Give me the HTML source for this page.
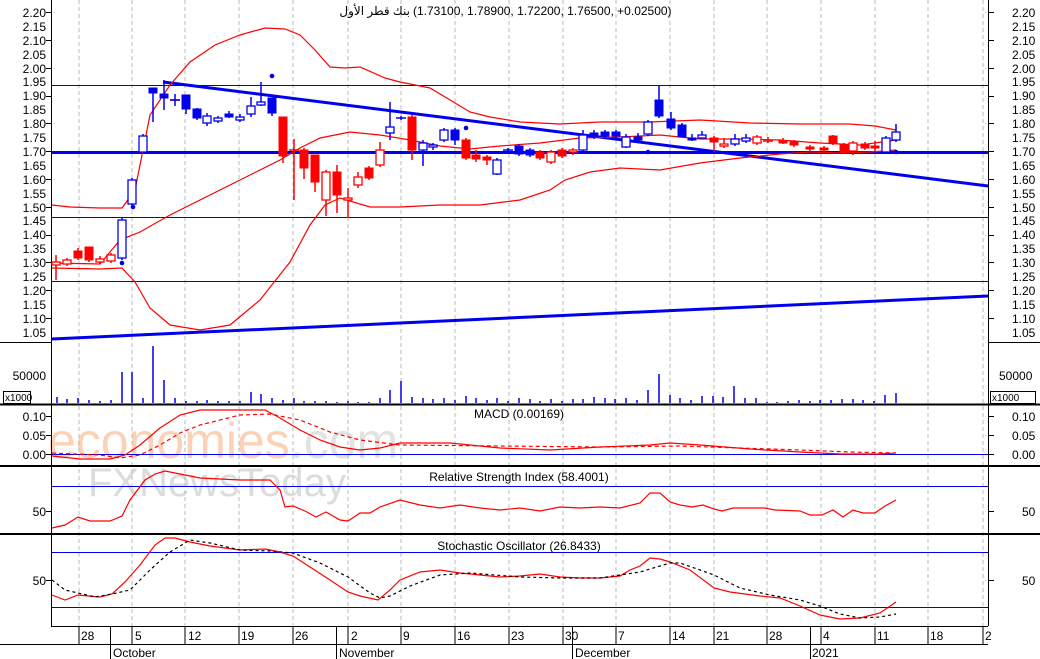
<!DOCTYPE html>
<html><head><meta charset="utf-8"><style>
html,body{margin:0;padding:0;background:#fff;}
svg{display:block;font-family:"Liberation Sans",sans-serif;}
text{font-size:12px;fill:#000;}
</style></head><body>
<svg width="1040" height="659" viewBox="0 0 1040 659" xmlns="http://www.w3.org/2000/svg">
<rect width="1040" height="659" fill="#fff"/>
<text x="48" y="458" style="font-size:50px;fill:#fbd2b8">economies<tspan style="fill:#e2e2e2">.com</tspan></text>
<text x="88" y="496" style="font-size:40px;fill:#dcdcdc">FXNewsToday</text>
<g stroke="#bbb" stroke-dasharray="4,3" stroke-width="1">
<path d="M79 0V626M132 0V626M185 0V626M239 0V626M293 0V626M348 0V626M401 0V626M455 0V626M509 0V626M563 0V626M616 0V626M670 0V626M714 0V626M767 0V626M821 0V626M875 0V626M928 0V626M983 0V626"/>
</g>
<g stroke="#000" stroke-width="1" fill="none">
<path d="M51.5 0V626M988.5 0V626M51 626.5H988M0 644.5H988"/>
<path d="M0 404.5H1040M0 466H1040M0 534H1040" stroke-width="2"/>
<path d="M0 342.5H52M988 342.5H1040"/>
</g>
<g stroke="#0000ee" fill="none">
<path d="M52 85.5H988M52 217.5H988M52 281.5H988"/>
<path d="M52 152.5H988" stroke-width="3"/>
<path d="M163 82L988 186" stroke-width="3"/>
<path d="M52 339L988 296" stroke-width="3"/>
<path d="M52 454.5H988M52 486.5H988M52 552.5H988M52 607.5H988"/>
</g>
<g stroke="#f00" fill="none" stroke-width="1.2">
<path d="M52 205L70 207L100 208L122 208L135 190L150 115L170 85L190 62L215 45L240 35L265 28L285 29L300 35L315 50L330 67L345 68L360 67L385 78L400 82L430 88L470 112L490 117L520 122L560 124L600 122L650 122L700 120L750 123L800 124L850 124L875 126L896 130"/>
<path d="M52 263L100 264L120 240L140 232L170 215L200 200L230 185L260 170L280 160L300 148L320 138L350 132L380 135L410 140L440 146L470 149L500 146L540 143L580 138L620 137L660 135L700 139L740 139L780 140L820 143L860 145L896 140"/>
<path d="M52 268L100 269L122 268L135 282L150 308L170 325L200 330L230 325L260 300L290 262L310 225L325 205L340 198L370 207L400 207L440 205L480 205L520 200L550 190L565 180L590 172L620 168L660 170L700 163L740 158L780 154L810 152L840 153L870 152L896 150"/>
</g>
<g stroke-width="1.5">
<path stroke="#f00" d="M56 255V280M67 258V266M78 248V260M89 247V262M100 256V264M111 253V263M283 117V163M294 139V200M304 148V179M315 155V192M326 170V216M337 165V213M348 188V218M358 172V188M369 166V180M380 142V167M412 115V160M466 138V160M476 150V162M487 155V165M540 150V160M551 150V164M562 148V158M573 148V155M714 136V152M724 138V148M757 135V145M768 137V143M783 138V144M794 140V147M810 145V151M824 146V152M833 135V145M844 143V154M853 141V155M865 142V150M875 141V151"/>
<path stroke="#0000ee" d="M122 218V260M132 178V206M143 134V152M153 88V122M164 80V110M175 94V106M186 95V114M197 108V120M207 113V126M218 116V123M229 111V118M240 114V122M251 97V117M261 82V106M272 98V116M390 102V140M401 116V120M423 140V166M433 143V150M444 128V142M455 128V145M497 158V175M508 148V152M519 144V156M530 148V157M583 130V152M594 130V139M605 130V139M616 130V139M626 134V148M638 133V143M648 120V136M659 85V118M671 112V130M682 123V137M692 134V141M702 131V138M735 134V146M746 134V143M886 136V154M896 124V142"/>
<path stroke="#f00" d="M170 100H180M289 150H299M763 141H773"/>
<path stroke="#0000ee" d="M170 100H180M396 118H406M503 150H513"/>
</g>
<g fill="#f00" stroke="#f00" stroke-width="1">
<rect x="74" y="251" width="8" height="7"/><rect x="85" y="247" width="8" height="13"/>
<rect x="279" y="117" width="8" height="39"/><rect x="300" y="150" width="8" height="18"/><rect x="311" y="155" width="8" height="27"/><rect x="333" y="172" width="8" height="23"/><rect x="365" y="168" width="8" height="10"/><rect x="408" y="117" width="8" height="33"/>
<rect x="462" y="140" width="8" height="18"/><rect x="472" y="155" width="8" height="4"/><rect x="483" y="157" width="8" height="3"/><rect x="536" y="152" width="8" height="6"/><rect x="558" y="150" width="8" height="6"/>
<rect x="710" y="138" width="8" height="4"/><rect x="779" y="141" width="8" height="2"/><rect x="790" y="142" width="8" height="3"/><rect x="806" y="147" width="8" height="2"/><rect x="820" y="148" width="8" height="2"/><rect x="829" y="136" width="8" height="7"/><rect x="840" y="145" width="8" height="7"/><rect x="861" y="144" width="8" height="4"/><rect x="871" y="146" width="8" height="2"/>
</g>
<g fill="#fff" stroke="#f00" stroke-width="1.3">
<rect x="52" y="262" width="8" height="3"/><rect x="63" y="260" width="8" height="4"/><rect x="96" y="259" width="8" height="3"/><rect x="107" y="255" width="8" height="6"/>
<rect x="322" y="172" width="8" height="28"/><rect x="344" y="198" width="8" height="2"/><rect x="354" y="177" width="8" height="8"/><rect x="376" y="150" width="8" height="15"/>
<rect x="547" y="152" width="8" height="10"/><rect x="569" y="150" width="8" height="2"/><rect x="720" y="144" width="8" height="2"/><rect x="753" y="137" width="8" height="6"/><rect x="849" y="143" width="8" height="8"/>
</g>
<g fill="#0000ee" stroke="#0000ee" stroke-width="1">
<rect x="149" y="88" width="8" height="5"/><rect x="160" y="94" width="8" height="4"/><rect x="182" y="95" width="8" height="14"/><rect x="193" y="109" width="8" height="9"/><rect x="225" y="114" width="8" height="3"/><rect x="268" y="98" width="8" height="15"/>
<rect x="451" y="130" width="8" height="10"/><rect x="515" y="146" width="8" height="8"/><rect x="526" y="150" width="8" height="5"/>
<rect x="590" y="133" width="8" height="4"/><rect x="601" y="132" width="8" height="4"/><rect x="612" y="132" width="8" height="4"/><rect x="634" y="137" width="8" height="3"/><rect x="655" y="100" width="8" height="16"/><rect x="667" y="119" width="8" height="9"/><rect x="678" y="125" width="8" height="12"/><rect x="688" y="138" width="8" height="2"/>
</g>
<g fill="#fff" stroke="#0000ee" stroke-width="1.3">
<rect x="118" y="220" width="8" height="38"/><rect x="128" y="180" width="8" height="24"/><rect x="139" y="136" width="8" height="16"/><rect x="203" y="116" width="8" height="7"/><rect x="214" y="118" width="8" height="3"/><rect x="236" y="117" width="8" height="3"/><rect x="247" y="106" width="8" height="8"/><rect x="257" y="102" width="8" height="3"/>
<rect x="386" y="127" width="8" height="6"/><rect x="419" y="143" width="8" height="7"/><rect x="429" y="145" width="8" height="2"/><rect x="440" y="130" width="8" height="10"/><rect x="493" y="160" width="8" height="14"/>
<rect x="579" y="135" width="8" height="15"/><rect x="622" y="137" width="8" height="10"/><rect x="644" y="122" width="8" height="12"/><rect x="698" y="135" width="8" height="3"/><rect x="731" y="139" width="8" height="5"/><rect x="742" y="138" width="8" height="3"/><rect x="882" y="138" width="8" height="14"/><rect x="892" y="132" width="8" height="8"/>
</g>
<g fill="#0000ee"><circle cx="133" cy="207" r="2.3"/><circle cx="122" cy="263" r="2.3"/><circle cx="272" cy="76" r="2.3"/><circle cx="466" cy="128" r="2.3"/><circle cx="648" cy="152" r="2.3"/><circle cx="896" cy="152" r="2.3"/></g>
<path stroke="#0000ee" stroke-width="1.5" d="M57 403V397M67 403V399M78 403V398M89 403V400M100 403V401M111 403V400M122 403V372M132 403V372M143 403V398M153 403V346M164 403V380M175 403V398M186 403V401M197 403V401M207 403V400M218 403V401M229 403V401M240 403V401M251 403V392M261 403V394M272 403V398M283 403V400M294 403V398M304 403V401M315 403V401M326 403V401M337 403V402M348 403V401M358 403V402M369 403V402M380 403V398M390 403V390M401 403V381M412 403V397M423 403V398M433 403V399M444 403V398M455 403V400M466 403V396M476 403V398M487 403V400M497 403V398M508 403V401M519 403V398M530 403V399M540 403V401M551 403V399M562 403V401M573 403V399M583 403V399M594 403V397M605 403V398M615 403V399M626 403V398M637 403V400M648 403V390M659 403V374M670 403V395M680 403V398M691 403V400M702 403V396M713 403V396M723 403V397M734 403V386M745 403V398M756 403V398M767 403V402M777 403V402M788 403V401M799 403V400M810 403V401M820 403V400M831 403V400M842 403V399M853 403V399M863 403V400M874 403V401M885 403V395M896 403V393"/>
<path fill="none" stroke="#f00" stroke-width="1.2" d="M52 456L80 459L110 459L125 455L140 445L160 428L180 415L200 410L240 410L265 410L280 418L300 430L320 440L340 447L360 450L380 448L400 443L450 443L500 448L550 450L600 447L650 445L670 443L700 445L750 449L800 452L840 454L880 454L896 453"/>
<path fill="none" stroke="#f00" stroke-width="1.2" stroke-dasharray="4,3" d="M52 453L100 455L120 458L140 455L160 445L180 433L200 425L240 415L270 414L300 420L330 432L360 440L400 445L500 446L600 447L680 446L740 448L800 450L850 452L896 453"/>
<path fill="none" stroke="#f00" stroke-width="1.2" d="M52 528L65 525L78 517L90 521L110 521L122 516L130 500L145 480L155 474L165 471L185 475L200 478L240 480L270 480L280 490L285 507L293 506L305 511L316 517L326 512L340 520L348 521L360 513L370 513L380 507L400 500L420 505L440 508L460 505L480 508L500 510L520 508L540 511L560 507L580 508L600 507L620 508L640 503L650 493L660 493L670 502L680 505L692 507L703 505L714 509L722 511L733 508L765 508L775 510L800 511L810 515L822 515L833 510L843 517L853 510L863 513L875 513L885 506L896 500"/>
<path fill="none" stroke="#f00" stroke-width="1.2" d="M52 595L65 600L78 595L100 597L112 594L125 582L140 565L155 545L165 538L175 538L190 542L210 546L240 550L265 549L280 552L293 556L310 567L330 580L348 592L360 596L378 600L390 590L400 580L420 572L440 570L460 573L480 575L500 577L520 576L540 574L560 577L580 578L600 578L620 576L630 570L640 566L650 558L660 559L670 562L690 570L714 588L730 592L760 596L780 598L800 606L820 615L840 619L860 618L880 613L896 602"/>
<path fill="none" stroke="#000" stroke-width="1.2" stroke-dasharray="3,3" d="M52 580L65 590L78 593L95 597L112 594L130 590L150 570L170 552L190 540L210 543L240 550L270 551L293 553L320 563L348 577L370 593L380 598L390 596L410 586L440 575L470 573L520 577L560 578L600 578L640 572L670 563L680 563L700 570L714 575L740 588L770 595L800 600L820 606L840 614L860 618L880 617L896 614"/>
<g stroke="#000" stroke-width="1">
<path d="M46 12.5H51M46 40.5H51M46 68.5H51M46 96.5H51M46 123.5H51M46 151.5H51M46 179.5H51M46 207.5H51M46 235.5H51M46 262.5H51M46 290.5H51M46 318.5H51M989 12.5H994M989 40.5H994M989 68.5H994M989 96.5H994M989 123.5H994M989 151.5H994M989 179.5H994M989 207.5H994M989 235.5H994M989 262.5H994M989 290.5H994M989 318.5H994"/>
<path d="M46 416.5H51M46 435.5H51M46 454.5H51M989 416.5H994M989 435.5H994M989 454.5H994M46 511.5H51M989 511.5H994M46 580.5H51M989 580.5H994"/>
<path d="M79 626V644M132 626V644M185 626V644M239 626V644M293 626V644M348 626V644M401 626V644M455 626V644M509 626V644M563 626V644M616 626V644M670 626V644M714 626V644M767 626V644M821 626V644M875 626V644M928 626V644M983 626V644"/>
<path d="M110.5 626V659M336.5 626V659M572.5 626V659M810.5 626V659"/>
</g>
<g text-anchor="end">
<text x="46" y="17">2.20</text><text x="46" y="31">2.15</text><text x="46" y="45">2.10</text><text x="46" y="59">2.05</text><text x="46" y="73">2.00</text><text x="46" y="86">1.95</text><text x="46" y="100">1.90</text><text x="46" y="114">1.85</text><text x="46" y="128">1.80</text><text x="46" y="142">1.75</text><text x="46" y="156">1.70</text><text x="46" y="170">1.65</text><text x="46" y="184">1.60</text><text x="46" y="198">1.55</text><text x="46" y="212">1.50</text><text x="46" y="225">1.45</text><text x="46" y="239">1.40</text><text x="46" y="253">1.35</text><text x="46" y="267">1.30</text><text x="46" y="281">1.25</text><text x="46" y="295">1.20</text><text x="46" y="309">1.15</text><text x="46" y="323">1.10</text><text x="46" y="337">1.05</text>
<text x="46" y="380">50000</text><text x="46" y="421">0.10</text><text x="46" y="440">0.05</text><text x="46" y="459">0.00</text><text x="46" y="516">50</text><text x="46" y="585">50</text>
</g>
<g>
<text x="1012" y="17">2.20</text><text x="1012" y="31">2.15</text><text x="1012" y="45">2.10</text><text x="1012" y="59">2.05</text><text x="1012" y="73">2.00</text><text x="1012" y="86">1.95</text><text x="1012" y="100">1.90</text><text x="1012" y="114">1.85</text><text x="1012" y="128">1.80</text><text x="1012" y="142">1.75</text><text x="1012" y="156">1.70</text><text x="1012" y="170">1.65</text><text x="1012" y="184">1.60</text><text x="1012" y="198">1.55</text><text x="1012" y="212">1.50</text><text x="1012" y="225">1.45</text><text x="1012" y="239">1.40</text><text x="1012" y="253">1.35</text><text x="1012" y="267">1.30</text><text x="1012" y="281">1.25</text><text x="1012" y="295">1.20</text><text x="1012" y="309">1.15</text><text x="1012" y="323">1.10</text><text x="1012" y="337">1.05</text>
<text x="999" y="380">50000</text><text x="1012" y="421">0.10</text><text x="1012" y="440">0.05</text><text x="1012" y="459">0.00</text><text x="1022" y="516">50</text><text x="1022" y="585">50</text>
</g>
<rect x="3.5" y="391.5" width="27" height="12" fill="#fff" stroke="#000"/>
<text x="5" y="401" style="font-size:10px">x1000</text>
<rect x="990.5" y="391.5" width="45" height="12" fill="#fff" stroke="#000"/>
<text x="992" y="401" style="font-size:10px">x1000</text>
<text x="410" y="15" text-anchor="end" style="font-family:'Liberation Sans','DejaVu Sans',sans-serif">بنك قطر الأول</text>
<text x="413" y="15">(1.73100, 1.78900, 1.72200, 1.76500, +0.02500)</text>
<text x="519" y="418" text-anchor="middle">MACD (0.00169)</text>
<text x="519" y="481" text-anchor="middle">Relative Strength Index (58.4001)</text>
<text x="519" y="550" text-anchor="middle">Stochastic Oscillator (26.8433)</text>
<g>
<text x="81" y="640">28</text><text x="135" y="640">5</text><text x="188" y="640">12</text><text x="241" y="640">19</text><text x="295" y="640">26</text><text x="351" y="640">2</text><text x="403" y="640">9</text><text x="457" y="640">16</text><text x="511" y="640">23</text><text x="565" y="640">30</text><text x="618" y="640">7</text><text x="672" y="640">14</text><text x="716" y="640">21</text><text x="769" y="640">28</text><text x="823" y="640">4</text><text x="877" y="640">11</text><text x="930" y="640">18</text><text x="985" y="640">2</text>
<text x="113" y="657">October</text><text x="339" y="657">November</text><text x="575" y="657">December</text><text x="812" y="657">2021</text>
</g>
</svg>
</body></html>
